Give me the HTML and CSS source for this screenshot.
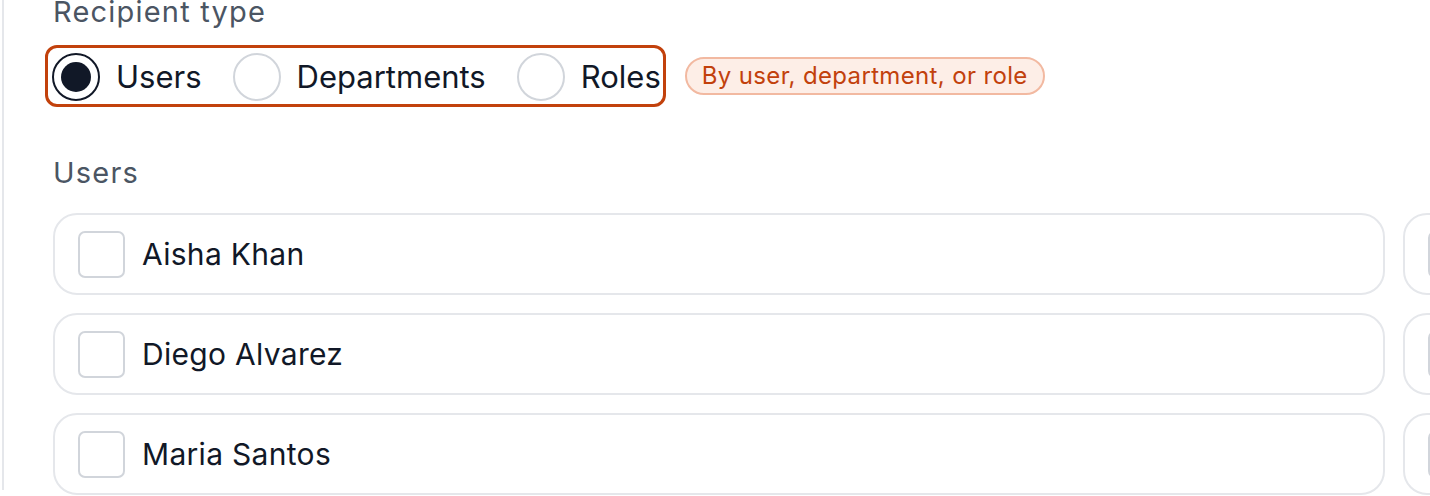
FILE: index.html
```html
<!DOCTYPE html>
<html>
<head>
<meta charset="utf-8">
<link rel="stylesheet" href="styles.css">
</head>
<body>
<div class="panel">
  <div class="field-label">Recipient type</div>
  <div class="type-row">
    <div class="radio-group">
      <label class="radio-opt"><span class="radio checked"><span class="dot"></span></span><span class="radio-text">Users</span></label>
      <label class="radio-opt"><span class="radio"></span><span class="radio-text">Departments</span></label>
      <label class="radio-opt"><span class="radio"></span><span class="radio-text">Roles</span></label>
    </div>
    <span class="badge">By user, department, or role</span>
  </div>
  <div class="section-label">Users</div>
  <div class="grid">
    <div class="card"><span class="check"></span><span class="name">Aisha Khan</span></div>
    <div class="card"><span class="check"></span><span class="name">Ben Carter</span></div>
    <div class="card"><span class="check"></span><span class="name">Diego Alvarez</span></div>
    <div class="card"><span class="check"></span><span class="name">Li Wei</span></div>
    <div class="card"><span class="check"></span><span class="name">Maria Santos</span></div>
    <div class="card"><span class="check"></span><span class="name">Omar Haddad</span></div>
  </div>
</div>
</body>
</html>
```

FILE: styles.css
```css
html, body {
  margin: 0;
  padding: 0;
  background: #ffffff;
  overflow: hidden;
}
body {
  font-family: Inter, "Noto Sans", sans-serif;
  color: #111827;
  width: 1430px;
  height: 496px;
}
.panel {
  margin-left: 2px;
  border-left: 2px solid #e5e7eb;
  padding-left: 49px;
  height: 496px;
  box-sizing: border-box;
}
.field-label {
  font-size: 29px;
  line-height: 36px;
  letter-spacing: 1.2px;
  color: #4b5563;
  margin-top: -6px;
  margin-bottom: 15px;
}
.type-row {
  display: flex;
  align-items: center;
  gap: 19px;
}
.radio-group {
  display: flex;
  align-items: center;
  margin-left: -8px;
  border: 3px solid #c2410c;
  border-radius: 12px;
  padding: 5px 2px 3px 4px;
  gap: 31px;
}
.radio-opt {
  display: flex;
  align-items: center;
  gap: 16px;
}
.radio {
  width: 48px;
  height: 48px;
  box-sizing: border-box;
  border: 2px solid #d1d5db;
  border-radius: 50%;
  display: flex;
  align-items: center;
  justify-content: center;
  flex: none;
}
.radio.checked {
  border-color: #111827;
}
.dot {
  width: 30px;
  height: 30px;
  border-radius: 50%;
  background: #111827;
}
.radio-text {
  font-size: 31px;
  line-height: 40px;
  color: #111827;
}
.badge {
  font-size: 24px;
  line-height: 34px;
  letter-spacing: 0.35px;
  color: #c2410c;
  background: #fdeee7;
  border: 2px solid #f2b9a1;
  border-radius: 999px;
  padding: 0 15px;
}
.section-label {
  font-size: 29px;
  line-height: 36px;
  letter-spacing: 1.2px;
  color: #4b5563;
  margin-top: 48px;
  margin-bottom: 22px;
}
.grid {
  display: grid;
  grid-template-columns: 1332px 1332px;
  column-gap: 18px;
  row-gap: 18px;
}
.card {
  height: 82px;
  box-sizing: border-box;
  border: 2px solid #e5e7eb;
  border-radius: 24px;
  display: flex;
  align-items: center;
  padding-left: 23px;
  gap: 17px;
}
.check {
  width: 47px;
  height: 47px;
  box-sizing: border-box;
  border: 2px solid #d1d5db;
  border-radius: 7px;
  flex: none;
}
.name {
  font-size: 30px;
  letter-spacing: 0.3px;
  color: #111827;
}
```
